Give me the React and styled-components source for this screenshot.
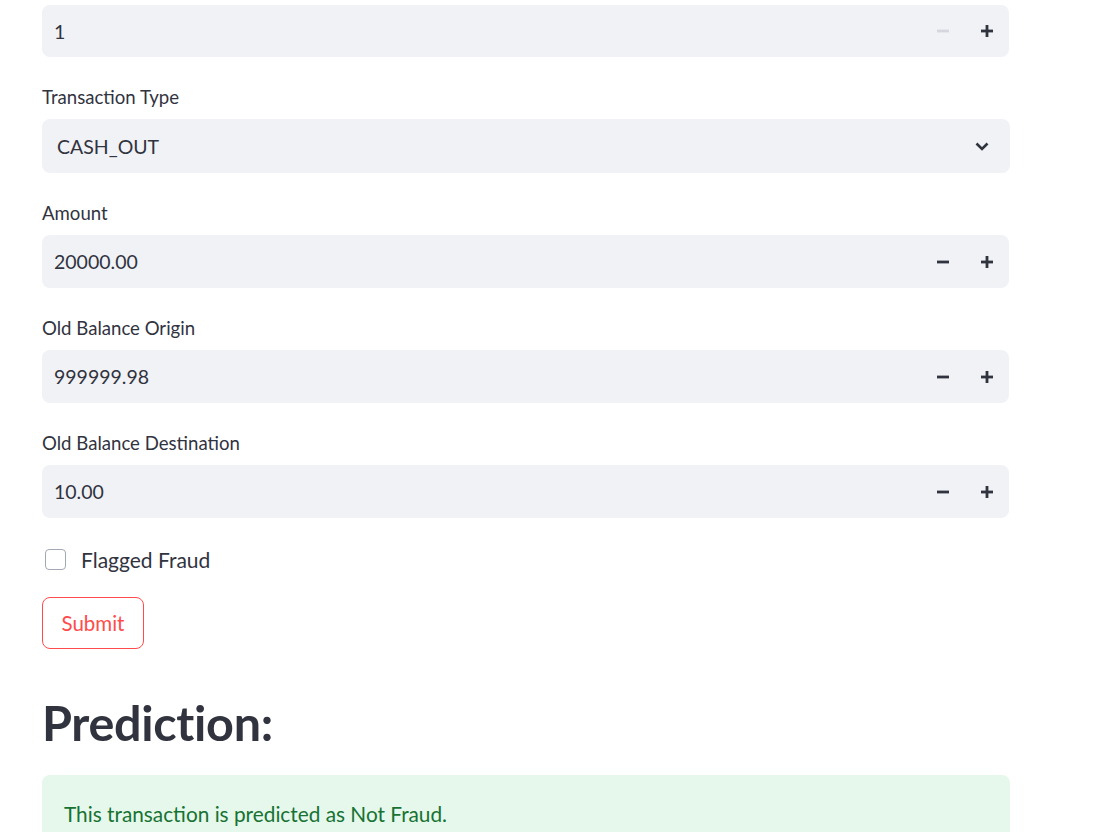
import styled, { createGlobalStyle } from 'styled-components';

const GlobalStyle = createGlobalStyle`
	body {
		margin: 0;
		background: #ffffff;
		font-family: Lato, "Noto Sans", sans-serif;
		color: #31333f;
	}
`;

const Page = styled.div`
	width: 968px;
	padding: 5px 0 0 42px;
	height: 827px;
	overflow: hidden;
`;

const Field = styled.div`
	margin-bottom: 29px;
`;

const Label = styled.div`
	font-size: 18.6px;
	line-height: 22px;
	height: 22px;
	margin-bottom: 11px;
	color: #31333f;
`;

const InputBox = styled.div`
	height: ${(p) => p.$height || 53}px;
	background: #f0f2f6;
	border-radius: 8px;
	display: flex;
	align-items: center;
	padding: 0 ${(p) => (p.$select ? '20px' : '0')} 0 ${(p) => (p.$select ? '15px' : '12px')};
	margin-right: ${(p) => (p.$select ? '0' : '1px')};
	box-sizing: border-box;
`;

const Value = styled.div`
	flex: 1;
	font-size: 19.5px;
	color: #31333f;
`;

const StepButton = styled.div`
	width: 44px;
	height: 100%;
	display: flex;
	align-items: center;
	justify-content: center;
	color: ${(p) => (p.$disabled ? '#d4d7de' : '#31333f')};
`;

const CheckRow = styled.label`
	display: flex;
	align-items: center;
	height: 28px;
	margin-top: -2px;
	margin-bottom: 24px;
	gap: 15px;
	padding-left: 3px;
`;

const Box = styled.span`
	width: 21px;
	height: 21px;
	box-sizing: border-box;
	border: 1px solid #a3a8b4;
	border-radius: 4px;
	background: #fff;
`;

const CheckText = styled.span`
	font-size: 21px;
	color: #31333f;
`;

const SubmitButton = styled.button`
	display: block;
	height: 52px;
	width: 102px;
	border: 1px solid #ff4b4b;
	border-radius: 8px;
	background: #fff;
	color: #ff4b4b;
	font-family: Lato, "Noto Sans", sans-serif;
	font-size: 20.5px;
	padding: 0;
	cursor: pointer;
`;

const Heading = styled.h2`
	margin: 43px 0 0;
	font-size: 48.5px;
	font-weight: 700;
	line-height: 60px;
	color: #31333f;
	letter-spacing: -0.3px;
`;

const Alert = styled.div`
	margin-top: 23px;
	background: #e5f8eb;
	border-radius: 8px;
	padding: 26px 22px;
	color: #177233;
	font-size: 20.8px;
	line-height: 26px;
`;

const Minus = () => (
	<svg width="12" height="12" viewBox="0 0 12 12">
		<rect x="0" y="4.6" width="12" height="2.8" fill="currentColor" />
	</svg>
);

const Plus = () => (
	<svg width="12" height="12" viewBox="0 0 12 12">
		<rect x="0" y="4.6" width="12" height="2.8" fill="currentColor" />
		<rect x="4.6" y="0" width="2.8" height="12" fill="currentColor" />
	</svg>
);

const Chevron = () => (
	<svg width="16" height="16" viewBox="0 0 16 16">
		<path d="M2.5 5.5 L8 11 L13.5 5.5" fill="none" stroke="#31333f" strokeWidth="2.6" />
	</svg>
);

const NumberInput = ({ value, minDisabled, height }) => (
	<InputBox $height={height}>
		<Value>{value}</Value>
		<StepButton $disabled={minDisabled}>
			<Minus />
		</StepButton>
		<StepButton>
			<Plus />
		</StepButton>
	</InputBox>
);

const fields = [
	{ label: 'Amount', value: '20000.00' },
	{ label: 'Old Balance Origin', value: '999999.98' },
	{ label: 'Old Balance Destination', value: '10.00' },
];

const App = () => {
	return (
		<Page>
			<GlobalStyle />
			<Field>
				<NumberInput value="1" minDisabled height={52} />
			</Field>
			<Field>
				<Label>Transaction Type</Label>
				<InputBox $select $height={54}>
					<Value>CASH_OUT</Value>
					<Chevron />
				</InputBox>
			</Field>
			{fields.map((f) => (
				<Field key={f.label}>
					<Label>{f.label}</Label>
					<NumberInput value={f.value} />
				</Field>
			))}
			<CheckRow>
				<Box />
				<CheckText>Flagged Fraud</CheckText>
			</CheckRow>
			<SubmitButton>Submit</SubmitButton>
			<Heading>Prediction:</Heading>
			<Alert>This transaction is predicted as Not Fraud.</Alert>
		</Page>
	);
};

export default App;
